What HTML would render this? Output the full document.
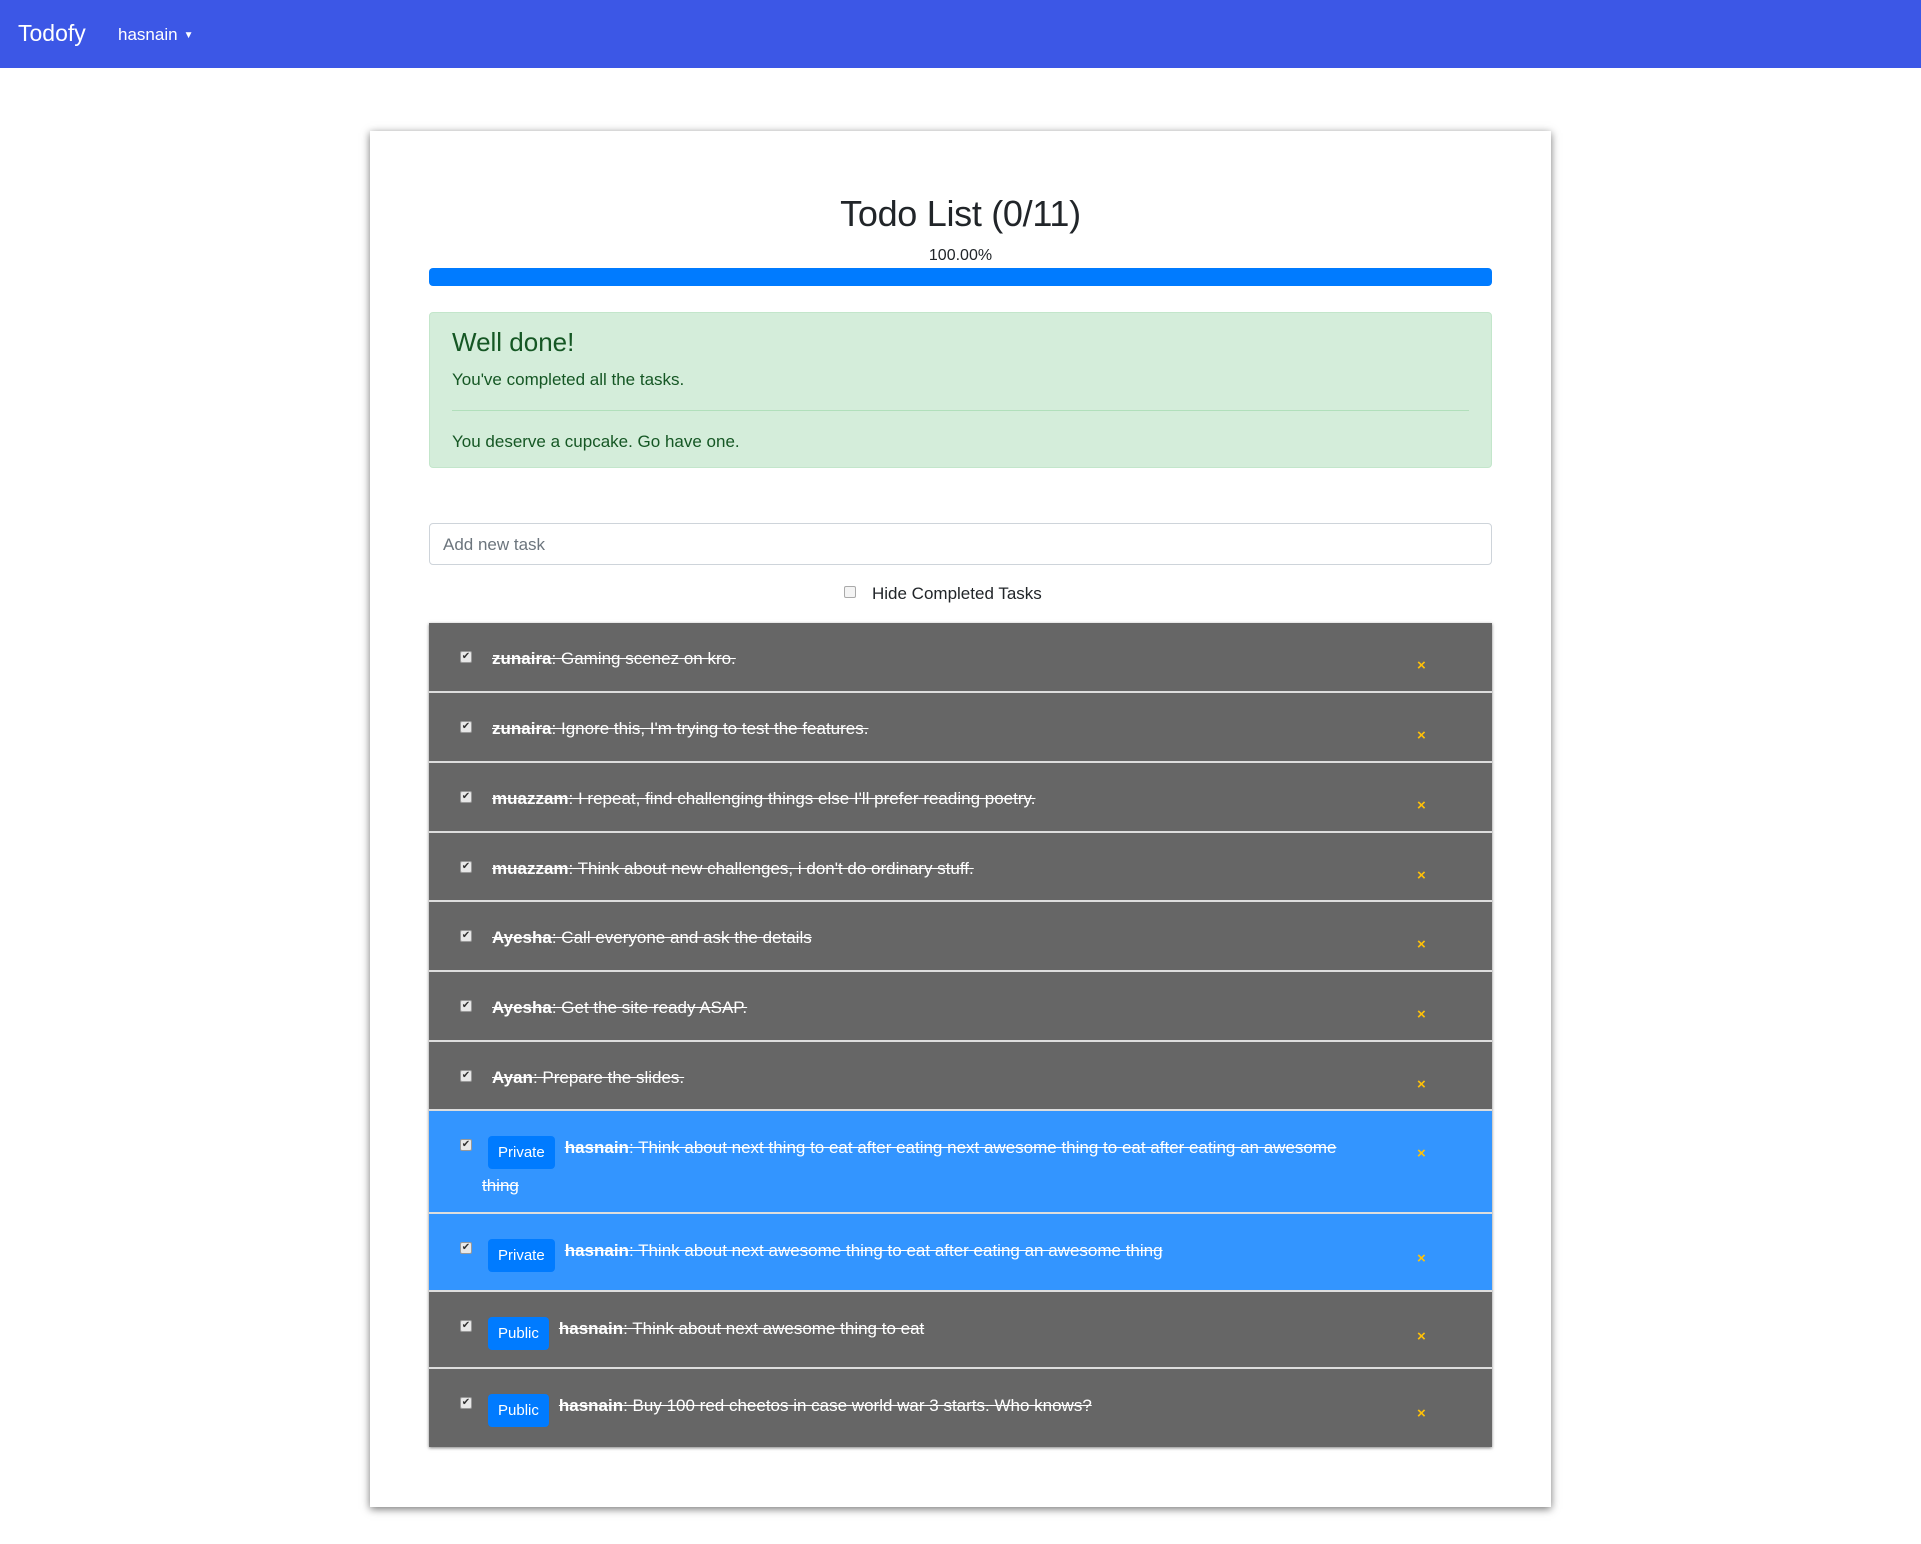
<!DOCTYPE html>
<html><head><meta charset="utf-8"><style>
*{box-sizing:border-box;margin:0;padding:0}
body{width:1921px;height:1544px;background:#fff;font-family:"Liberation Sans",sans-serif;position:relative;overflow:hidden;color:#212529}
.nav{position:absolute;left:0;top:0;width:1921px;height:68px;background:#3c57e6;color:#fff}
.brand{position:absolute;left:18px;top:20px;font-size:23px}
.user{position:absolute;left:118px;top:25px;font-size:17px}
.user span{font-size:10px;margin-left:6px;vertical-align:2px}
.card{position:absolute;left:370px;top:131px;width:1181px;height:1376px;background:#fff;box-shadow:0 2px 8px rgba(0,0,0,.55)}
.abs{position:absolute}
h1{position:absolute;left:429px;width:1063px;top:193px;text-align:center;font-size:36px;font-weight:normal;letter-spacing:-.3px}
.pct{left:429px;width:1063px;top:247px;text-align:center;font-size:16px}
.bar{left:429px;width:1063px;top:268px;height:18px;background:#007bff;border-radius:4px}
.alert{left:429px;top:312px;width:1063px;height:156px;background:#d4edda;border:1px solid #c3e6cb;border-radius:4px;color:#155724}
.alert h4{position:absolute;left:22px;top:14px;font-size:26px;font-weight:normal}
.alert p{position:absolute;left:22px;font-size:17px}
.alert hr{position:absolute;left:22px;right:22px;top:97px;border:0;border-top:1px solid #b1dfbb}
.input{left:429px;top:523px;width:1063px;height:42px;border:1px solid #ced4da;border-radius:4px;color:#6c757d;font-size:17px;padding:11px 13px}
.hide{left:844px;top:584px;font-size:17px}
.cb{display:inline-block;width:12px;height:12px;border:1px solid #aaa;border-radius:2px;background:#f4f4f4;vertical-align:1px}
.hide .cb{margin-right:16px}
.list{left:429px;top:623px;width:1063px;box-shadow:0 1px 3px rgba(0,0,0,.5)}
.row{position:relative;border-bottom:2px solid #ddd;background:#666;color:#fff;font-size:17px}
.row:last-child{border-bottom:0}
.row.b{background:#3395ff}
.row .ck{position:absolute;left:31px;top:28px;width:12px;height:12px;background:#e8e8e8;border:1px solid #999;border-radius:2px;color:#333;font-size:10px;line-height:10px;text-align:center}
.row .t{position:absolute;left:63px;top:19px;right:120px;line-height:33px;text-decoration:line-through}
.row .t b{font-weight:bold}
.row .x{position:absolute;left:988px;top:34px;color:#ffc107;font-size:15px;font-weight:bold}
.badge{display:inline-block;text-indent:0;background:#007bff;color:#fff;border-radius:4px;font-size:15px;padding:0 10px;height:33px;line-height:33px;margin-right:10px;vertical-align:-4px}
.row .t.bt{left:53px;top:20px;text-indent:6px;line-height:33px}
</style></head><body>
<div class="nav"><div class="brand">Todofy</div><div class="user">hasnain<span>▼</span></div></div>
<div class="card"></div>
<h1>Todo List (0/11)</h1>
<div class="abs pct">100.00%</div>
<div class="abs bar"></div>
<div class="abs alert"><h4>Well done!</h4><p style="top:57px">You've completed all the tasks.</p><hr><p style="top:119px">You deserve a cupcake. Go have one.</p></div>
<div class="abs input">Add new task</div>
<div class="abs hide"><span class="cb"></span>Hide Completed Tasks</div>
<div class="abs list">
<div class="row" style="height:70px"><div class="ck">✔</div><div class="t"><b>zunaira</b>: Gaming scenez on kro.</div><div class="x">×</div></div>
<div class="row" style="height:70px"><div class="ck">✔</div><div class="t"><b>zunaira</b>: Ignore this, I'm trying to test the features.</div><div class="x">×</div></div>
<div class="row" style="height:70px"><div class="ck">✔</div><div class="t"><b>muazzam</b>: I repeat, find challenging things else I'll prefer reading poetry.</div><div class="x">×</div></div>
<div class="row" style="height:69px"><div class="ck">✔</div><div class="t"><b>muazzam</b>: Think about new challenges, i don't do ordinary stuff.</div><div class="x">×</div></div>
<div class="row" style="height:70px"><div class="ck">✔</div><div class="t"><b>Ayesha</b>: Call everyone and ask the details</div><div class="x">×</div></div>
<div class="row" style="height:70px"><div class="ck">✔</div><div class="t"><b>Ayesha</b>: Get the site ready ASAP.</div><div class="x">×</div></div>
<div class="row" style="height:69px"><div class="ck">✔</div><div class="t"><b>Ayan</b>: Prepare the slides.</div><div class="x">×</div></div>
<div class="row b" style="height:103px"><div class="ck">✔</div><div class="t bt"><span class="badge">Private</span><b>hasnain</b>: Think about next thing to eat after eating next awesome thing to eat after eating an awesome thing</div><div class="x" style="top:34px">×</div></div>
<div class="row b" style="height:78px"><div class="ck">✔</div><div class="t bt"><span class="badge">Private</span><b>hasnain</b>: Think about next awesome thing to eat after eating an awesome thing</div><div class="x" style="top:36px">×</div></div>
<div class="row" style="height:77px"><div class="ck">✔</div><div class="t bt"><span class="badge">Public</span><b>hasnain</b>: Think about next awesome thing to eat</div><div class="x" style="top:36px">×</div></div>
<div class="row" style="height:78px"><div class="ck">✔</div><div class="t bt"><span class="badge">Public</span><b>hasnain</b>: Buy 100 red cheetos in case world war 3 starts. Who knows?</div><div class="x" style="top:36px">×</div></div>
</div>
</body></html>
